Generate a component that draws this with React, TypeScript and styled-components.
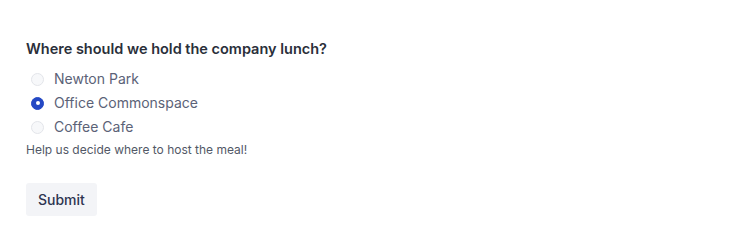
import React, { useState } from "react";
import styled, { createGlobalStyle } from "styled-components";

const GlobalStyle = createGlobalStyle`
  body {
    margin: 0;
    background: #ffffff;
    font-family: Inter, "Noto Sans", sans-serif;
    -webkit-font-smoothing: antialiased;
  }
`;

const Form = styled.form`
  display: flex;
  flex-direction: column;
  align-items: flex-start;
  padding: 40px 26px 10px;
`;

const Legend = styled.div`
  font-size: 14.5px;
  font-weight: 600;
  color: #2a2f3a;
  line-height: 18px;
  margin-bottom: 12px;
`;

const Options = styled.div`
  display: flex;
  flex-direction: column;
  gap: 6px;
`;

const Option = styled.label`
  display: flex;
  align-items: center;
  gap: 10px;
  padding-left: 5px;
  font-size: 14px;
  line-height: 18px;
  color: #5b6277;
  cursor: pointer;
`;

const Dot = styled.span<{ $checked: boolean }>`
  width: 13px;
  height: 13px;
  border-radius: 50%;
  box-sizing: border-box;
  border: 1px solid ${(p) => (p.$checked ? "#2448c4" : "#e3e5ea")};
  background: ${(p) => (p.$checked ? "#2448c4" : "#f7f8fa")};
  display: flex;
  align-items: center;
  justify-content: center;

  &::after {
    content: "";
    width: 4px;
    height: 4px;
    border-radius: 50%;
    background: #ffffff;
    display: ${(p) => (p.$checked ? "block" : "none")};
  }
`;

const Hidden = styled.input`
  display: none;
`;

const Help = styled.p`
  margin: 6px 0 0;
  font-size: 12px;
  line-height: 16px;
  color: #525866;
`;

const Button = styled.button`
  margin-top: 25px;
  height: 33px;
  padding: 0 12px;
  border: none;
  border-radius: 3px;
  background: #f3f4f7;
  font-family: inherit;
  font-size: 14px;
  font-weight: 500;
  color: #2e3450;
  cursor: pointer;
`;

const choices = ["Newton Park", "Office Commonspace", "Coffee Cafe"];

export default function App() {
  const [value, setValue] = useState("Office Commonspace");
  return (
    <>
      <GlobalStyle />
      <Form onSubmit={(e) => e.preventDefault()}>
        <Legend>Where should we hold the company lunch?</Legend>
        <Options>
          {choices.map((c) => (
            <Option key={c}>
              <Hidden
                type="radio"
                name="lunch"
                checked={value === c}
                onChange={() => setValue(c)}
              />
              <Dot $checked={value === c} />
              {c}
            </Option>
          ))}
        </Options>
        <Help>Help us decide where to host the meal!</Help>
        <Button type="submit">Submit</Button>
      </Form>
    </>
  );
}
